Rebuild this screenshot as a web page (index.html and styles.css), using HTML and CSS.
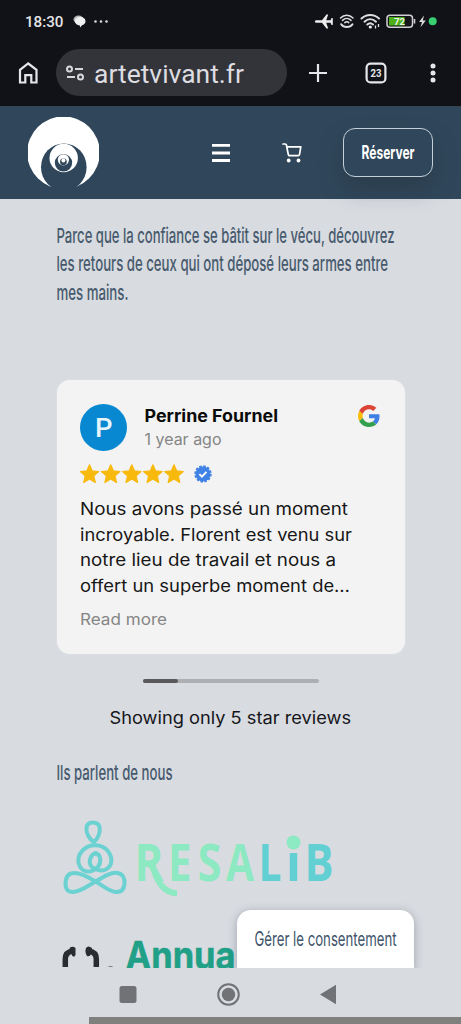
FILE: index.html
```html
<!DOCTYPE html>
<html lang="fr">
<head>
<meta charset="utf-8">
<title>artetvivant.fr</title>
<link rel="stylesheet" href="styles.css">
</head>
<body>
<div class="phone">
  <div class="status">
    <svg class="status-left" width="90" height="22" viewBox="24 10 90 22">
      <text class="clock" x="25" y="27" textLength="38.500" lengthAdjust="spacingAndGlyphs">18:30</text>
      <ellipse cx="78.500" cy="19.500" rx="5" ry="4" fill="#b9babc"/>
      <path d="M80 17c3.400 0 5.500 1.800 5.500 4.300 0 2-1.500 3.400-3.500 4l-1.800 2.300-.4-2.200c-3-.2-4.900-1.800-4.900-4.100C74.900 18.800 77 17 80 17z" fill="#f0f0f1"/>
      <g fill="#d9dadd"><circle cx="95.500" cy="21.500" r="1.300"/><circle cx="101" cy="21.500" r="1.300"/><circle cx="106.500" cy="21.500" r="1.300"/></g>
    </svg>
    <svg width="128" height="22" viewBox="312 10 128 22">
      <path d="M316 20.200h6l4.500-5.700h1.700l-2 5.700h4.300l1.100-2.200h1.200v7h-1.200l-1.100-2.200h-4.300l2 5.700h-1.700l-4.500-5.700h-6c-1.500-.6-1.500-2 0-2.600z" fill="#ededee"/>
      <g fill="none" stroke="#dedfe1" stroke-width="1.500" stroke-linecap="round">
        <path d="M340.500 18c3.500-3.700 9-3.700 12.500 0M342.500 20.400c2.500-2.500 6-2.500 8.500 0M344.800 22.600c1.300-1.200 2.700-1.200 4 0"/>
        <path stroke-width="2" d="M341.200 24.200c2.500 3.700 8.700 3.700 11.300 0"/>
        <path stroke-width="2" d="M361.500 18.500c5-4.700 12.500-4.700 17.500 0M364.500 21.700c3.500-3.200 8-3.200 11.500 0M367.300 24.500c1.700-1.500 4-1.500 5.700 0"/>
      </g>
      <circle cx="370.300" cy="27" r="1.600" fill="#eee"/>
      <path d="M375.500 25.500v3M378.500 24v3" stroke="#ddd" stroke-width="1.300"/>
      <rect x="387" y="15.200" width="25.500" height="12" rx="3" fill="#14151a" stroke="#d2d0d5" stroke-width="1.500"/>
      <path d="M389 17h15.500v8.500H389z" fill="#4cae18"/>
      <path d="M414.500 19v4.500" stroke="#d2d0d5" stroke-width="1.600"/>
      <text class="battery" x="394" y="25" textLength="11" lengthAdjust="spacingAndGlyphs">72</text>
      <path d="M424 15.500l-5 6.400h3l-1.500 5.400 5.300-6.800h-3z" fill="#ddd"/>
      <circle cx="432.700" cy="21.200" r="4" fill="#38cf71"/>
    </svg>
  </div>

  <div class="browser">
    <svg class="home" width="22" height="24" viewBox="17 61 22 24"><path d="M20 82.500V69.800l8.200-6.300 8.300 6.300v12.700h-5.200v-7.300h-6v7.300z" fill="none" stroke="#e6e5ea" stroke-width="2.200"/></svg>
    <div class="url">
      <svg width="19" height="18" viewBox="65 64 19 18"><g fill="none" stroke="#d8d7dc" stroke-width="2"><circle cx="69.500" cy="69" r="2.500"/><path d="M75 69h8M67 77h8"/><circle cx="80.500" cy="77" r="2.500"/></g></svg>
      <svg class="line" width="151" height="30"><text class="address" x="0" y="24.500" textLength="150" lengthAdjust="spacingAndGlyphs">artetvivant.fr</text></svg>
    </div>
    <svg class="plus" width="20" height="20"><path d="M10 1v18M1 10h18" stroke="#e6e5ea" stroke-width="2.200" fill="none"/></svg>
    <svg class="tabs" width="22" height="22"><rect x="1.600" y="1.600" width="18.800" height="18.800" rx="4" fill="none" stroke="#e6e5ea" stroke-width="2.200"/><text class="tab-count" x="5.500" y="14.800" textLength="11" lengthAdjust="spacingAndGlyphs">23</text></svg>
    <svg class="dots" width="6" height="20" fill="#e6e5ea"><circle cx="3" cy="3" r="2.500"/><circle cx="3" cy="10" r="2.500"/><circle cx="3" cy="17" r="2.500"/></svg>
  </div>

  <header class="site-header">
    <svg class="logo" width="71" height="72" viewBox="28 117 71 72">
      <circle cx="63.500" cy="152.700" r="36.300" fill="#fff"/>
      <ellipse cx="63.800" cy="167.200" rx="22.800" ry="23.800" fill="#30475b"/>
      <path d="M54 187.500h19v3H54z" fill="#30475b"/>
      <circle cx="63.700" cy="158" r="14.200" fill="#fff"/>
      <circle cx="63.500" cy="162.800" r="8.700" fill="#30475b"/>
      <circle cx="63.400" cy="159.800" r="5.600" fill="#fff"/>
      <circle cx="63.400" cy="161.800" r="3.400" fill="#30475b"/>
      <circle cx="63.400" cy="160.500" r="2" fill="#fff"/>
    </svg>
    <svg class="menu" width="18" height="18"><path d="M0 1.400h18M0 9h18M0 16.500h18" stroke="#fff" stroke-width="2.800"/></svg>
    <svg class="cart" width="20" height="20" viewBox="282 143 20 20"><path d="M283 144h2.200q1 0 1.200 1l1.900 9.500q.2 1.200 1.400 1.200h8.300q1.200 0 1.500-1.100l1.300-7.800h-14" fill="none" stroke="#fff" stroke-width="1.700" stroke-linejoin="round" stroke-linecap="round"/><circle cx="288.700" cy="160.500" r="1.900" fill="#fff"/><circle cx="298.500" cy="160.500" r="1.900" fill="#fff"/></svg>
    <div class="reserve"><svg class="line" width="54" height="20"><text x="0.500" y="16.300" textLength="53" lengthAdjust="spacingAndGlyphs">Réserver</text></svg></div>
  </header>

  <main>
    <div class="intro">
      <svg class="line" width="348" height="29"><text x="-0.500" y="22.500" textLength="338" lengthAdjust="spacingAndGlyphs">Parce que la confiance se bâtit sur le vécu, découvrez</text></svg>
      <svg class="line" width="348" height="29"><text x="-0.500" y="22" textLength="331.500" lengthAdjust="spacingAndGlyphs">les retours de ceux qui ont déposé leurs armes entre</text></svg>
      <svg class="line" width="348" height="29"><text x="-0.500" y="22" textLength="72" lengthAdjust="spacingAndGlyphs">mes mains.</text></svg>
    </div>

    <article class="card">
      <div class="reviewer">
        <div class="avatar"><svg class="line" width="17" height="20"><text x="0" y="18.500" textLength="17.500" lengthAdjust="spacingAndGlyphs">P</text></svg></div>
        <div class="who">
          <svg class="line" width="136" height="24"><text class="name" x="-0.500" y="19" textLength="133.500" lengthAdjust="spacingAndGlyphs">Perrine Fournel</text></svg>
          <svg class="line" width="136" height="22"><text class="muted" x="-0.500" y="17.500" textLength="77" lengthAdjust="spacingAndGlyphs">1 year ago</text></svg>
        </div>
        <svg class="google" width="22" height="22" viewBox="0 0 48 48">
          <path fill="#dc4437" d="M24 9.500c3.540 0 6.710 1.220 9.210 3.600l6.850-6.850C35.900 2.380 30.470 0 24 0 14.620 0 6.510 5.380 2.560 13.220l7.980 6.190C12.430 13.720 17.740 9.500 24 9.500z"/>
          <path fill="#3f7fe3" d="M46.980 24.550c0-1.570-.15-3.090-.38-4.550H24v9.020h12.940c-.58 2.960-2.260 5.480-4.780 7.180l7.730 6c4.510-4.180 7.090-10.360 7.090-17.650z"/>
          <path fill="#fbbc05" d="M10.530 28.590A14.500 14.500 0 0 1 9.770 24c0-1.600.27-3.140.76-4.590l-7.980-6.190A23.900 23.900 0 0 0 0 24c0 3.880.92 7.540 2.560 10.780z"/>
          <path fill="#34a04f" d="M24 48c6.480 0 11.930-2.130 15.890-5.810l-7.730-6c-2.150 1.450-4.920 2.300-8.160 2.300-6.260 0-11.570-4.220-13.470-9.910l-7.980 6.190C6.510 42.620 14.620 48 24 48z"/>
        </svg>
      </div>
      <div class="rating">
        <svg width="106" height="20" viewBox="0.500 0 106 20" fill="#f8b90d" stroke="#f8b90d" stroke-width="1.200" stroke-linejoin="round">
          <defs><path id="star" d="M10 .8l2.700 6.100 6.600.6-5 4.400 1.500 6.600L10 15.100l-5.800 3.400 1.500-6.600L.7 7.500l6.600-.6z"/></defs>
          <use href="#star"/><use href="#star" x="21.200"/><use href="#star" x="42.300"/><use href="#star" x="63.400"/><use href="#star" x="84.500"/>
        </svg>
        <svg class="verified" width="18" height="18" viewBox="-9 -9 18 18"><circle r="7.500" fill="#4082e6"/><circle r="7.500" fill="none" stroke="#4082e6" stroke-width="2.400" stroke-dasharray="2.400 1.527"/><path d="M-3.600.2l2.500 2.500 4.600-4.900" fill="none" stroke="#fff" stroke-width="1.900"/></svg>
      </div>
      <div class="review">
        <svg class="line" width="300" height="25.500"><text x="0" y="19" textLength="268" lengthAdjust="spacingAndGlyphs">Nous avons passé un moment</text></svg>
        <svg class="line" width="300" height="25.500"><text x="0" y="19" textLength="272" lengthAdjust="spacingAndGlyphs">incroyable. Florent est venu sur</text></svg>
        <svg class="line" width="300" height="25.500"><text x="0" y="19" textLength="256" lengthAdjust="spacingAndGlyphs">notre lieu de travail et nous a</text></svg>
        <svg class="line" width="300" height="25.500"><text x="0" y="19" textLength="270" lengthAdjust="spacingAndGlyphs">offert un superbe moment de…</text></svg>
      </div>
      <svg class="line more" width="100" height="24"><text class="muted" x="0" y="18" textLength="87" lengthAdjust="spacingAndGlyphs">Read more</text></svg>
    </article>

    <div class="track"><div class="thumb"></div></div>
    <svg class="line showing" width="242" height="26"><text x="-0.500" y="19" textLength="241.500" lengthAdjust="spacingAndGlyphs">Showing only 5 star reviews</text></svg>
    <svg class="line press" width="120" height="28"><text x="-0.500" y="21" textLength="116" lengthAdjust="spacingAndGlyphs">Ils parlent de nous</text></svg>

    <svg class="resalib" width="280" height="80" viewBox="60 817.500 280 80">
      <g fill="none" stroke="#6cd2d1" stroke-width="4">
        <path d="M94 842.500c-5-3-8-9-7.500-14 .4-3.800 2.700-5.500 6.300-5.500s6.400 1.700 6.900 5.500c.6 5-2 11-5.700 14z"/>
        <path d="M95.500 869.500c-5-1.500-6.500-5.500-5.500-9.500 1-3.300 2.700-5.500 5.500-6.500 3 1 4.600 3.200 4.800 6.500.2 4.500-1.800 8.300-7.300 11-5 2.300-11 .7-13.500-4.500-2.500-5-1.200-11.500 3.500-16 6.500-6.500 18-6.500 24 0 5 5.500 5.800 12.500 2 17-4 4.500-10 4.500-14.500 1z"/>
        <path d="M95.500 882c-8-5-15-8.500-21-8.500-6.500 0-9 4.500-9 11 0 5.500 3 8.500 8 8 8-.8 14-6 22-10.500 8-4.700 15-9.500 22-8.500 5.500.8 7.500 5.500 7 11-.5 5.300-3.500 8.500-9 8-7-.7-12-6-20-10.500z"/>
      </g>
      <g class="resa"><text x="134.500" y="881" textLength="29" lengthAdjust="spacingAndGlyphs">R</text><text x="168" y="881" textLength="23.500" lengthAdjust="spacingAndGlyphs">E</text><text x="197.500" y="881" textLength="24" lengthAdjust="spacingAndGlyphs">S</text><text x="226" y="881" textLength="28" lengthAdjust="spacingAndGlyphs">A</text></g>
      <path d="M152 862c3 17 10 31 25 32" fill="none" stroke="#8de9c1" stroke-width="6"/>
      <g class="lib"><text x="258.500" y="881" textLength="23" lengthAdjust="spacingAndGlyphs">L</text><text x="286" y="881" textLength="15" lengthAdjust="spacingAndGlyphs">i</text><text x="304.500" y="881" textLength="29" lengthAdjust="spacingAndGlyphs">B</text></g>
      <circle cx="293.500" cy="843" r="7" fill="#8de9c1"/>
    </svg>

    <div class="annuaire">
      <svg width="53" height="28" viewBox="60 940 53 28"><g fill="none" stroke="#292c30" stroke-width="5.500"><path d="M65.300 969v-9q0-7 7.500-8"/><path d="M96.300 969v-9q0-7-7.500-8"/></g><path d="M69.500 949q3-2.500 6 0v7q-1.500 3-3.500.5zM92 949q-4-3-6 0-1.500 4 1 8 3 1 4-2z" fill="#292c30"/><path d="M107.500 968q3.500-2 6 0z" fill="#777"/></svg>
      <svg class="annu-word" width="110" height="32"><text x="-0.500" y="30" textLength="110" lengthAdjust="spacingAndGlyphs">Annua</text></svg>
    </div>
    <div class="consent"><svg class="line" width="142" height="28"><text x="-0.500" y="21.500" textLength="142" lengthAdjust="spacingAndGlyphs">Gérer le consentement</text></svg></div>
  </main>

  <nav class="system-nav">
    <svg width="461" height="56" viewBox="0 968 461 56">
      <rect x="119.500" y="986" width="17" height="17" rx="2.500" fill="#717275"/>
      <circle cx="228.500" cy="994.500" r="10.300" fill="none" stroke="#717275" stroke-width="2"/><circle cx="228.500" cy="994.500" r="6.700" fill="#717275"/>
      <path d="M320 994.500l16-9.800v19.600z" fill="#717275"/>
      <path d="M89 1017h372v7H89z" fill="#80807f"/>
    </svg>
  </nav>
</div>
</body>
</html>
```

FILE: styles.css
```css
* { box-sizing: border-box; }
body { margin: 0; background: #d8dbe0; font-family: Inter, "Liberation Sans", sans-serif; }
svg { display: block; flex: none; }
.line { overflow: visible; }
.phone { width: 461px; height: 1024px; overflow: hidden; display: flex; flex-direction: column; }

.status { height: 42px; flex: none; padding: 10px 21px 0 24px; background: #111217; display: flex; justify-content: space-between; }
.clock { font: 500 15.5px Roboto, sans-serif; fill: #e4e4e7; }
.battery { font: 700 9.5px Roboto, sans-serif; fill: #eef5e8; }

.browser { height: 64px; flex: none; padding: 7px 0 0 17px; background: #111217; display: flex; align-items: flex-start; }
.home { margin-top: 12px; }
.url { width: 231px; height: 47px; margin-left: 17px; padding-left: 9px; border-radius: 24px; background: #333439; display: flex; align-items: center; gap: 10px; }
.address { font: 400 26.5px Roboto, sans-serif; fill: #dddce1; }
.plus { margin: 14px 0 0 21px; }
.tabs { margin: 13px 0 0 37px; }
.tab-count { font: 700 10.5px Roboto, sans-serif; fill: #e6e5ea; }
.dots { margin: 14px 0 0 43px; }

.site-header { height: 93px; flex: none; padding-left: 28px; background: #30475b; border-top: 1px solid #36424c; display: flex; align-items: flex-start; position: relative; }
.logo { margin-top: 10px; }
.menu { margin: 37px 0 0 113px; }
.cart { margin: 36px 0 0 52px; }
.reserve { width: 90px; height: 49px; margin: 21px 0 0 41px; border: 1px solid #c3d0da; border-radius: 12px; display: flex; align-items: center; justify-content: center; background: #30475b; box-shadow: 0 12px 22px rgba(35, 43, 50, .35); }
.reserve text { font-size: 18.5px; font-weight: 650; fill: #fff; }

main { height: 769px; flex: none; padding: 21px 56px 0 57px; display: flex; flex-direction: column; overflow: hidden; }
.intro text, .press text { font-size: 20.5px; font-weight: 500; fill: #475a6d; }
.card { width: 348px; height: 274px; flex: none; margin-top: 73px; padding: 23px 24px 0 23px; border-radius: 13px; background: #f3f3f3; box-shadow: 0 0 2px rgba(255, 255, 255, .4); }
.reviewer { display: flex; align-items: flex-start; }
.avatar { width: 47px; height: 47px; margin-top: 1px; border-radius: 50%; background: #0788d1; display: flex; align-items: center; justify-content: center; }
.avatar text { font-family: Roboto, sans-serif; font-size: 25px; font-weight: 500; fill: #e9f5fc; }
.who { width: 136px; margin-left: 18px; }
.name { font-size: 17px; font-weight: 650; fill: #0b0b0b; }
.muted { font-size: 15.5px; fill: #858585; }
.google { margin: 2px 0 0 77px; }
.rating { display: flex; align-items: center; gap: 8px; margin-top: 13px; }
.review { margin-top: 12px; }
.review text { font-size: 17px; fill: #171717; }
.more { margin-top: 9px; }
.track { width: 176px; height: 4px; flex: none; margin: 25px auto 0; border-radius: 2px; background: #adafb3; }
.thumb { width: 35px; height: 4px; border-radius: 2px; background: #59595b; }
.showing { margin: 22px auto 0; }
.showing text { font-size: 17px; fill: #15161a; }
.press { margin-top: 28px; }
.resalib { margin: 30px 0 0 3px; }
.resa text, .lib text { font-family: "Open Sans", sans-serif; font-weight: 700; font-size: 52px; }
.resa { fill: #8de9c1; }
.lib { fill: #62cfd3; }
.annuaire { height: 28px; flex: none; margin: 42px 0 0 3px; display: flex; gap: 13px; }
.annu-word text { font-size: 38px; font-weight: 700; fill: #1fa087; stroke: #1fa087; stroke-width: .5; stroke-linejoin: round; }
.consent { width: 177px; height: 60px; flex: none; margin: -57px 0 0 180px; padding: 14px 0 0 18px; border-radius: 14px 14px 0 0; background: #fff; box-shadow: 0 2px 10px rgba(50, 60, 75, .35); position: relative; }
.consent text { font-size: 20px; fill: #40546a; }
.system-nav { height: 56px; background: #d8dbe0; }
```
